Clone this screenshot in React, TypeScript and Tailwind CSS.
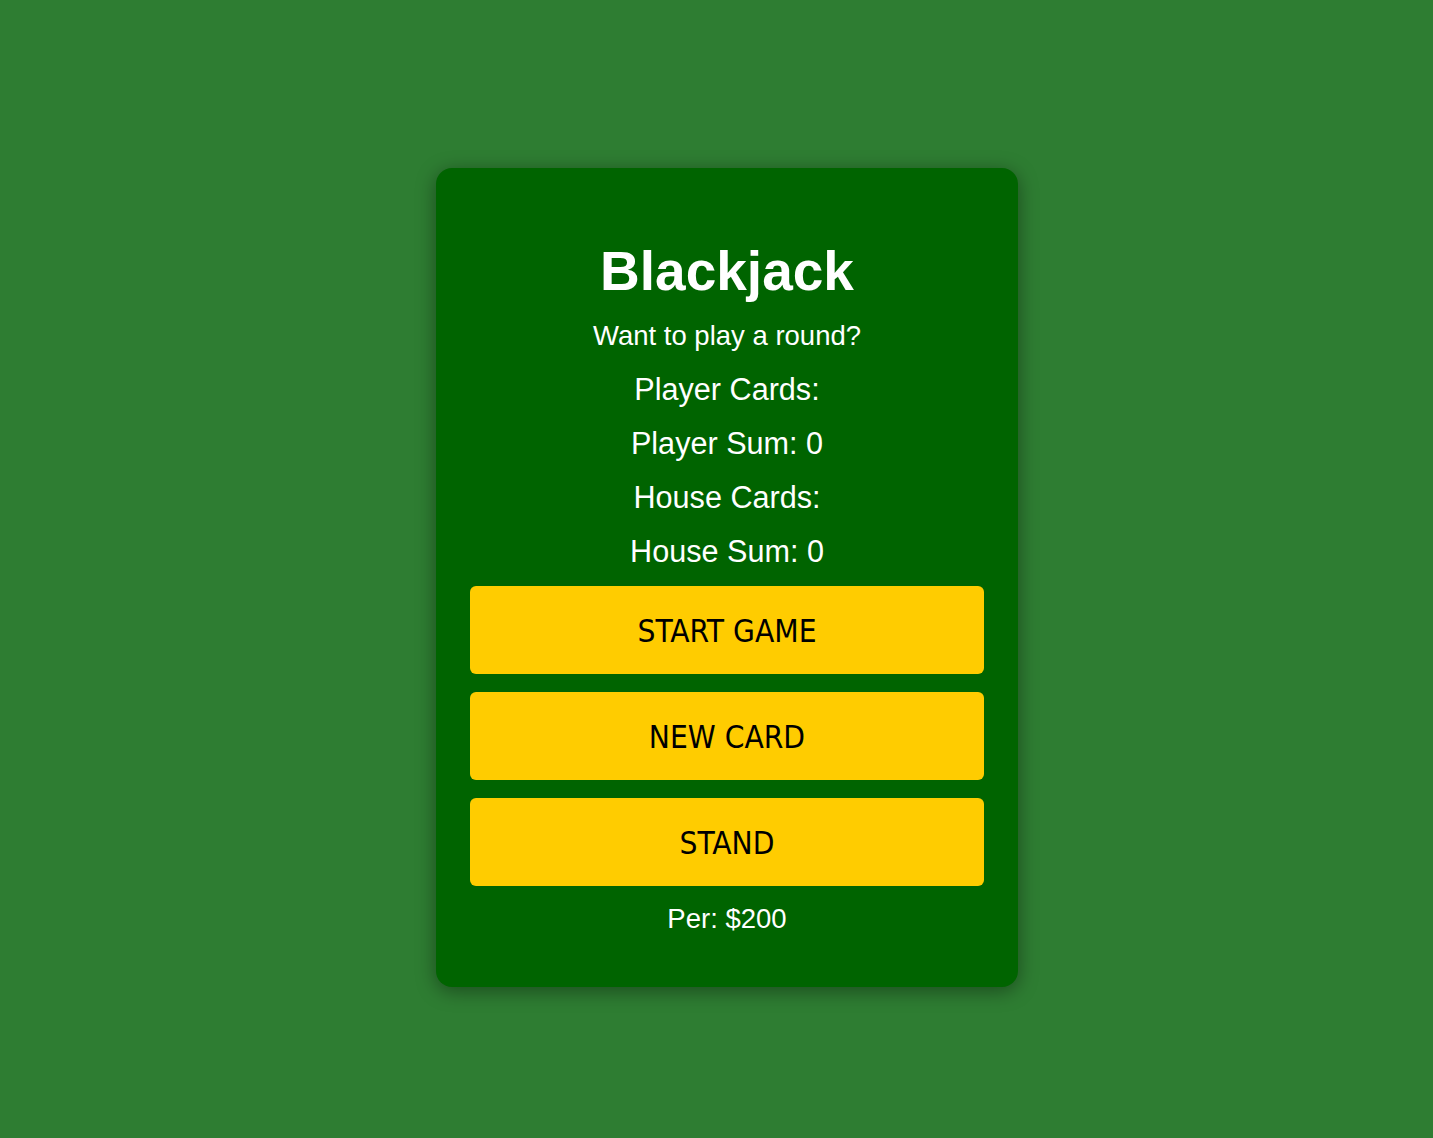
export default function App() {
  const buttons = ["START GAME", "NEW CARD", "STAND"];
  return (
    <div className="min-h-[1138px] w-full bg-[#2e7d32] flex justify-center items-start pt-[168px] pl-[21px]">
      <div
        className="w-[582px] bg-[#006400] rounded-2xl shadow-[0_4px_20px_rgba(0,0,0,0.4)] px-[34px] pt-[71px] pb-[52px] flex flex-col items-center text-white"
        style={{ fontFamily: '"Liberation Sans", Arial, sans-serif' }}
      >
        <h1 className="text-[55px] leading-[64px] font-bold">Blackjack</h1>
        <p className="mt-[17px] text-[27.5px] leading-[32px]">Want to play a round?</p>
        <p className="mt-[20px] text-[30.6px] leading-[34px]">Player Cards:</p>
        <p className="mt-[20px] text-[30.6px] leading-[34px]">Player Sum: 0</p>
        <p className="mt-[20px] text-[30.6px] leading-[34px]">House Cards:</p>
        <p className="mt-[20px] text-[30.6px] leading-[34px]">House Sum: 0</p>
        <div className="mt-[18px] w-full flex flex-col gap-[18px]">
          {buttons.map((b) => (
            <button
              key={b}
              className="w-full h-[88px] bg-[#ffcc00] rounded-md text-black text-[31.4px] pt-[3px] flex items-center justify-center"
              style={{ fontFamily: '"DejaVu Sans Condensed", "DejaVu Sans", Verdana, sans-serif', fontStretch: "condensed" }}
            >
              {b}
            </button>
          ))}
        </div>
        <p className="mt-[17px] text-[27.5px] leading-[32px]">Per: $200</p>
      </div>
    </div>
  );
}
